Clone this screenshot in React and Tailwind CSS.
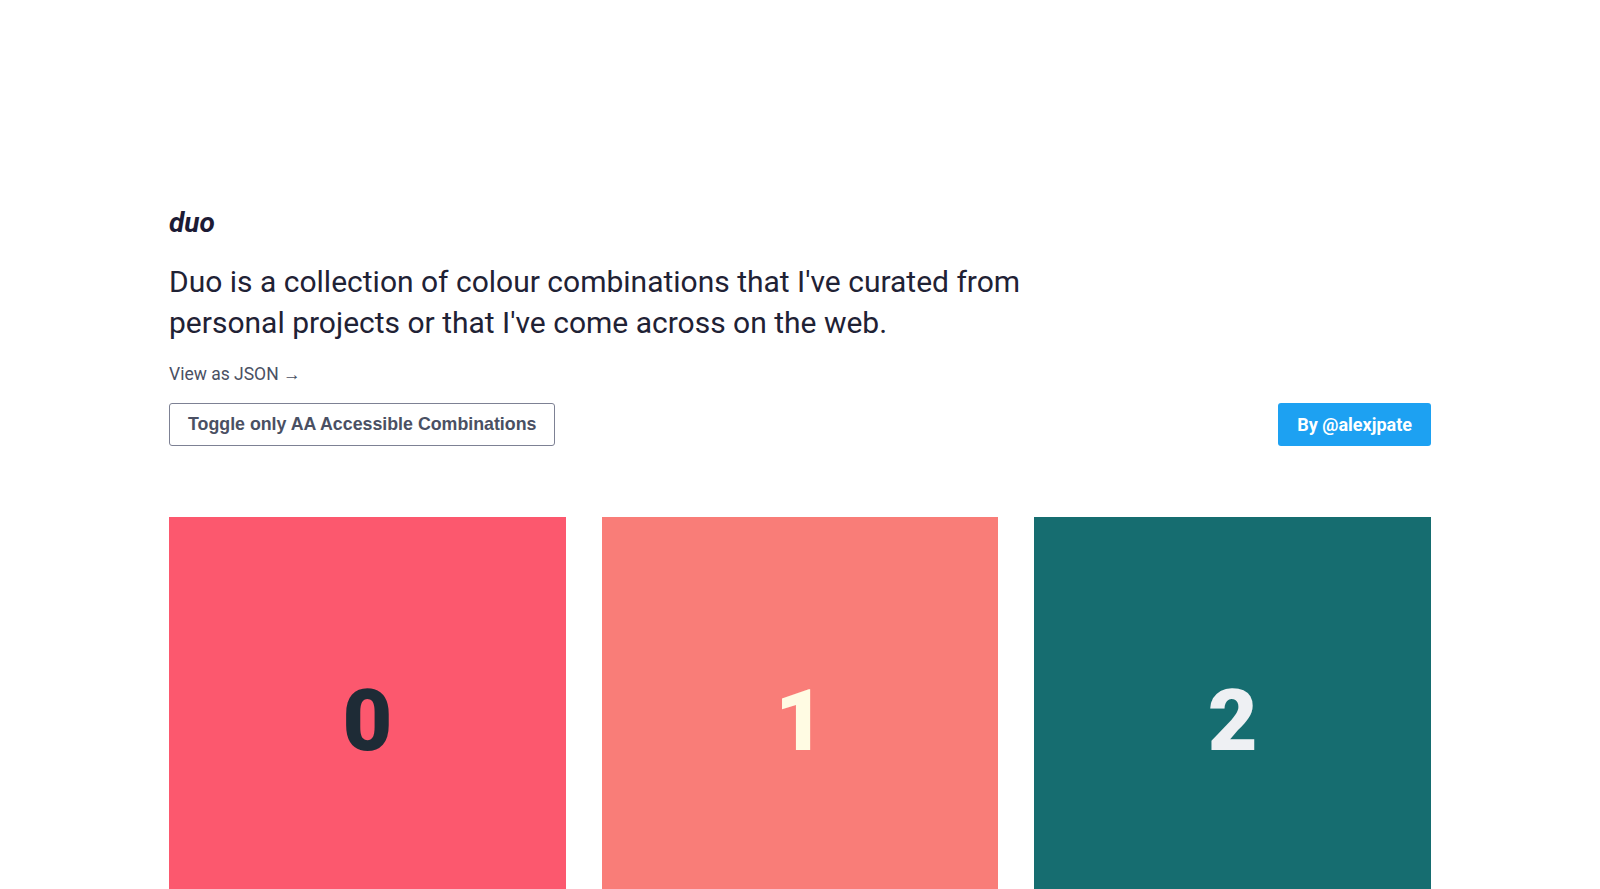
import React from "react";

const combos = [
  { bg: "bg-[#fc586e]", fg: "text-[#1e2b36]" },
  { bg: "bg-[#f97d78]", fg: "text-[#fffbe3]" },
  { bg: "bg-[#166d70]", fg: "text-[#eef0f3]" },
];

const App = () => {
  return (
    <div className="min-h-screen bg-white" style={{ fontFamily: "Roboto, 'Noto Sans', sans-serif" }}>
      <div className="w-[1262px] mx-auto pt-[204px]">
        {/* Header */}
        <h1 className="text-[28px] leading-[37px] font-bold italic text-[#1c1b35]">duo</h1>
        <p className="mt-[20px] text-[30px] leading-[41px] text-[#1f2235] max-w-[900px]">
          Duo is a collection of colour combinations that I've curated from personal projects or that I've come across on the web.
        </p>
        <a href="#" className="block mt-[19px] text-[17.5px] leading-[24px] text-[#4a5063]">View as JSON →</a>

        {/* Actions */}
        <div className="flex items-center justify-between mt-[17px]">
          <button
            className="h-[43px] px-[18px] border border-[#7d8194] rounded-[3px] text-[17.8px] font-bold text-[#4a5063]"
            style={{ fontFamily: "'Liberation Sans', Arial, sans-serif" }}
          >
            Toggle only AA Accessible Combinations
          </button>
          <a href="#" className="h-[43px] px-[19px] flex items-center rounded-[3px] bg-[#1da1f2] text-white text-[18px] font-bold">
            By @alexjpate
          </a>
        </div>

        {/* Combinations */}
        <div className="grid grid-cols-3 gap-9 mt-[71px]">
          {combos.map((c, i) => (
            <div key={i} className={`aspect-square flex items-center justify-center ${c.bg}`}>
              <span className={`text-[86px] leading-none font-black ${c.fg} pt-[12px]`} style={{ fontFamily: "Roboto, sans-serif" }}>
                {i}
              </span>
            </div>
          ))}
        </div>
      </div>
    </div>
  );
};

export default App;
